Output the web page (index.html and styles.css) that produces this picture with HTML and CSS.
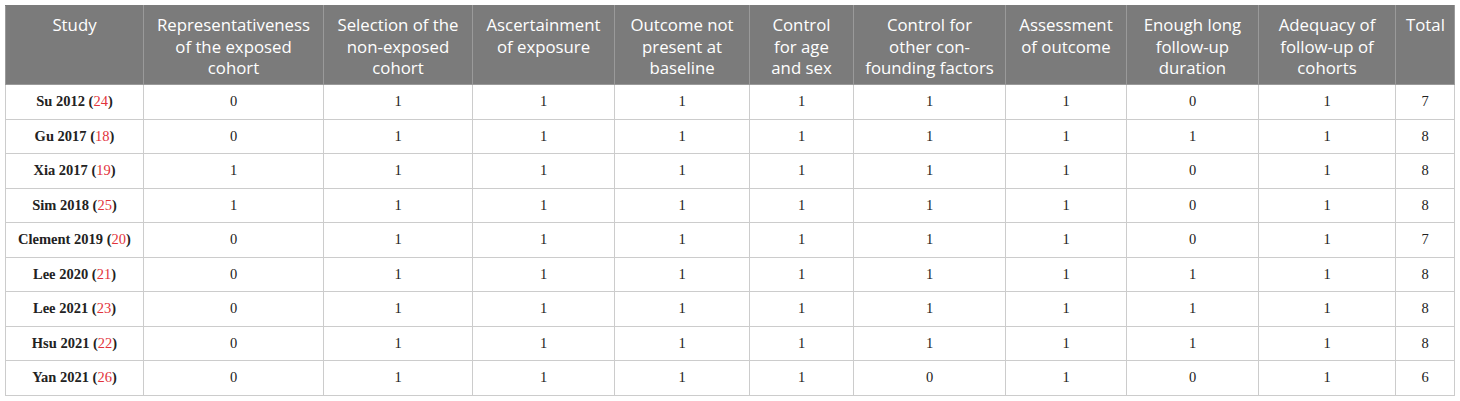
FILE: index.html
```html
<!DOCTYPE html>
<html>
<head>
<meta charset="utf-8">
<link rel="stylesheet" href="styles.css">
</head>
<body>
<table class="nos">
  <colgroup>
    <col class="c1"><col class="c2"><col class="c3"><col class="c4"><col class="c5"><col class="c6"><col class="c7"><col class="c8"><col class="c9"><col class="c10"><col class="c11">
  </colgroup>
  <thead>
    <tr>
      <th>Study</th>
      <th>Representativeness of the exposed cohort</th>
      <th>Selection of the non-exposed cohort</th>
      <th>Ascertainment of exposure</th>
      <th>Outcome not present at baseline</th>
      <th>Control for age and sex</th>
      <th>Control for other con-founding factors</th>
      <th>Assessment of outcome</th>
      <th>Enough long follow-up duration</th>
      <th>Adequacy of follow-up of cohorts</th>
      <th>Total</th>
    </tr>
  </thead>
  <tbody>
    <tr><td class="study">Su 2012 (<span class="ref">24</span>)</td><td>0</td><td>1</td><td>1</td><td>1</td><td>1</td><td>1</td><td>1</td><td>0</td><td>1</td><td>7</td></tr>
    <tr><td class="study">Gu 2017 (<span class="ref">18</span>)</td><td>0</td><td>1</td><td>1</td><td>1</td><td>1</td><td>1</td><td>1</td><td>1</td><td>1</td><td>8</td></tr>
    <tr><td class="study">Xia 2017 (<span class="ref">19</span>)</td><td>1</td><td>1</td><td>1</td><td>1</td><td>1</td><td>1</td><td>1</td><td>0</td><td>1</td><td>8</td></tr>
    <tr><td class="study">Sim 2018 (<span class="ref">25</span>)</td><td>1</td><td>1</td><td>1</td><td>1</td><td>1</td><td>1</td><td>1</td><td>0</td><td>1</td><td>8</td></tr>
    <tr><td class="study">Clement 2019 (<span class="ref">20</span>)</td><td>0</td><td>1</td><td>1</td><td>1</td><td>1</td><td>1</td><td>1</td><td>0</td><td>1</td><td>7</td></tr>
    <tr><td class="study">Lee 2020 (<span class="ref">21</span>)</td><td>0</td><td>1</td><td>1</td><td>1</td><td>1</td><td>1</td><td>1</td><td>1</td><td>1</td><td>8</td></tr>
    <tr><td class="study">Lee 2021 (<span class="ref">23</span>)</td><td>0</td><td>1</td><td>1</td><td>1</td><td>1</td><td>1</td><td>1</td><td>1</td><td>1</td><td>8</td></tr>
    <tr><td class="study">Hsu 2021 (<span class="ref">22</span>)</td><td>0</td><td>1</td><td>1</td><td>1</td><td>1</td><td>1</td><td>1</td><td>1</td><td>1</td><td>8</td></tr>
    <tr><td class="study">Yan 2021 (<span class="ref">26</span>)</td><td>0</td><td>1</td><td>1</td><td>1</td><td>1</td><td>0</td><td>1</td><td>0</td><td>1</td><td>6</td></tr>
  </tbody>
</table>
</body>
</html>
```

FILE: styles.css
```css
html, body {
  margin: 0;
  background: #ffffff;
}
body {
  padding: 5px 0 0 5px;
}
.nos {
  border-collapse: collapse;
  table-layout: fixed;
  width: 1449px;
}
.c1 { width: 138px; }
.c2 { width: 180px; }
.c3 { width: 149px; }
.c4 { width: 142px; }
.c5 { width: 135px; }
.c6 { width: 104px; }
.c7 { width: 152px; }
.c8 { width: 121px; }
.c9 { width: 132px; }
.c10 { width: 137px; }
.c11 { width: 59px; }

.nos th {
  background: #7b7b7b;
  color: #ffffff;
  font-family: "Open Sans", "Noto Sans", sans-serif;
  font-weight: 400;
  font-size: 16.8px;
  line-height: 21.5px;
  text-align: center;
  vertical-align: top;
  padding: 8px 10px 0 10px;
  height: 79px;
  border: 1px solid #9a9a9a;
  border-top-color: #7b7b7b;
  box-sizing: border-box;
}
.nos thead tr {
  height: 79px;
}
.nos td {
  font-family: "Liberation Serif", "Times New Roman", serif;
  font-size: 14.5px;
  color: #222222;
  text-align: center;
  vertical-align: middle;
  border: 1px solid #cccccc;
  padding: 0 4px;
  height: 34.5px;
  box-sizing: border-box;
}
.nos td.study {
  font-weight: 700;
}
.ref {
  color: #e2333b;
  font-weight: 400;
}
```
